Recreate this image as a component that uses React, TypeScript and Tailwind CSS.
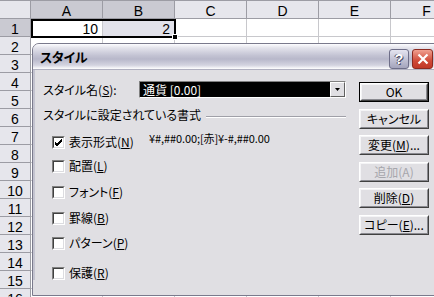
import React from "react";

const JP = "font-['Noto_Sans_CJK_JP',sans-serif] [font-feature-settings:'palt']";

function U({ c }: { c: string }) {
  return <span className="underline underline-offset-[1px]">{c}</span>;
}

function Btn({ children, def, disabled }: { children: React.ReactNode; def?: boolean; disabled?: boolean }) {
  return (
    <div className={`w-[70px] h-[20px] ${def ? "border border-black" : ""}`}>
      <div className="w-full h-full border border-t-white border-l-white border-b-[#404040] border-r-[#404040]">
        <div
          className={`w-full h-full border border-t-[#f4f4f6] border-l-[#f4f4f6] border-b-[#8a8a90] border-r-[#8a8a90] flex items-center justify-center text-[12px] leading-none ${
            disabled ? "text-[#a6a6ac]" : "text-black"
          }`}
        >
          {children}
        </div>
      </div>
    </div>
  );
}

function Check({ checked }: { checked?: boolean }) {
  return (
    <div className="w-[13px] h-[13px] border border-t-[#808080] border-l-[#808080] border-b-white border-r-white shrink-0">
      <div className="w-full h-full border border-t-[#404040] border-l-[#404040] border-b-[#dcdce0] border-r-[#dcdce0] bg-white flex items-center justify-center">
        {checked && (
          <svg width="9" height="9" viewBox="0 0 9 9">
            <path d="M1 4 L3 6 L8 1 M1 5 L3 7 L8 2 M1 6 L3 8 L8 3" stroke="black" strokeWidth="1" fill="none" />
          </svg>
        )}
      </div>
    </div>
  );
}

export default function App() {
  const cols = ["A", "B", "C", "D", "E", "F"];
  const rows = Array.from({ length: 16 }, (_, i) => i + 1);
  return (
    <div className="relative w-[434px] h-[297px] overflow-hidden bg-white font-['Liberation_Sans',sans-serif]">
      {/* sheet */}
      <div className="flex h-[19px] border-t border-[#9c9ca4] bg-[#e6e6ec]">
        <div className="w-[31px] shrink-0 border-r border-b border-[#9c9ca4]" />
        {cols.map((c, i) => (
          <div
            key={c}
            className={`w-[72px] shrink-0 border-r border-b border-[#9c9ca4] flex items-center justify-center pt-[3px] text-[14px] text-black leading-none ${
              i < 2 ? "bg-[#cacad2]" : ""
            }`}
          >
            {c}
          </div>
        ))}
      </div>
      {rows.map((r) => (
        <div key={r} className="flex h-[18px]">
          <div
            className={`w-[31px] shrink-0 border-r border-b border-[#9c9ca4] flex items-center justify-center pt-[3px] text-[14px] leading-none ${
              r === 1 ? "bg-[#cacad2]" : "bg-[#e6e6ec]"
            }`}
          >
            {r}
          </div>
          {cols.map((c, i) => (
            <div
              key={c}
              className={`w-[72px] shrink-0 border-r border-b border-[#c8c8cc] flex items-center justify-end pr-[4px] pt-[3px] text-[14px] leading-none ${
                r === 1 && i === 1 ? "bg-[#e2e2ea]" : ""
              }`}
            >
              {r === 1 && i === 0 ? "10" : r === 1 && i === 1 ? "2" : ""}
            </div>
          ))}
        </div>
      ))}
      {/* selection border */}
      <div className="absolute left-[31px] top-[19px] w-[145px] h-[19px] border-2 border-black pointer-events-none" />
      <div className="absolute left-[172px] top-[34px] w-[6px] h-[6px] bg-black border border-white" />

      {/* dialog */}
      <div className={`absolute left-[32px] top-[43px] w-[410px] h-[253px] rounded-t-[7px] border border-[#7a7a8c] bg-[#e0dfe3] overflow-hidden ${JP}`}>
        <div className="h-[26px] flex items-center pl-[7px] pr-[8px] bg-[linear-gradient(to_bottom,#fdfdff_0%,#e4e4ec_15%,#c4c4d4_45%,#b8b8ca_60%,#d4d4e0_85%,#ffffff_100%)] border-b border-[#b0b0c0]">
          <span className="text-[13px] font-bold text-black tracking-[-0.3px]">スタイル</span>
          <div className="ml-auto flex gap-[3px] mt-[5px]">
            <div className="w-[20px] h-[20px] rounded-[3px] border border-[#6e6e88] bg-[linear-gradient(to_bottom,#e4e4f0,#a4a4bc)] flex items-center justify-center text-white text-[14px] font-bold font-['Liberation_Sans',sans-serif] [text-shadow:1px_1px_0_#505068,-1px_0_0_#505068]">
              ?
            </div>
            <div className="w-[21px] h-[20px] rounded-[3px] border border-[#8c2a20] bg-[linear-gradient(to_bottom,#f0a090,#d04a38_60%,#c03828)] flex items-center justify-center">
              <svg width="12" height="12" viewBox="0 0 12 12">
                <path d="M1.5 1.5 L10.5 10.5 M10.5 1.5 L1.5 10.5" stroke="white" strokeWidth="2.2" />
              </svg>
            </div>
          </div>
        </div>
        <div className="flex pl-[8px] pt-[11px] border-l-[2px] border-l-[#c4c4d0]">
          {/* left */}
          <div className="w-[303px] shrink-0 flex flex-col">
            <div className="flex items-center h-[17px]">
              <span className="w-[96px] text-[12px] leading-none">スタイル名(<U c="S" />):</span>
              <div className="w-[207px] h-[17px] border border-t-[#808080] border-l-[#808080] border-b-white border-r-white flex bg-black">
                <div className="flex-1 text-white text-[12px] leading-none flex items-center pl-[3px]">通貨 [0.00]</div>
                <div className="w-[15px] h-full border border-t-white border-l-white border-b-[#606060] border-r-[#606060] bg-[#e0dfe3] flex items-center justify-center">
                  <svg width="5" height="3" viewBox="0 0 5 3">
                    <path d="M0 0 H5 L2.5 3 Z" fill="black" />
                  </svg>
                </div>
              </div>
            </div>
            <div className="flex items-center h-[14px] mt-[10px]">
              <span className="text-[12px] leading-none">スタイルに設定されている書式</span>
              <div className="flex-1 ml-[5px] mt-[4px] h-[2px] border-t border-[#a0a0a8] border-b border-b-white" />
            </div>
            <div className="flex items-center h-[14px] mt-[13px] pl-[9px]">
              <Check checked />
              <span className="ml-[4px] w-[80px] text-[12px] leading-none">表示形式(<U c="N" />)</span>
              <span className="mb-[8px] text-[11px] leading-none tracking-[-0.1px]">¥#,##0.00;[赤]¥-#,##0.00</span>
            </div>
            <div className="flex items-center h-[14px] mt-[10px] pl-[9px]">
              <Check />
              <span className="ml-[4px] text-[12px] leading-none">配置(<U c="L" />)</span>
            </div>
            <div className="flex items-center h-[14px] mt-[12px] pl-[9px]">
              <Check />
              <span className="ml-[4px] text-[12px] leading-none">フォント(<U c="F" />)</span>
            </div>
            <div className="flex items-center h-[14px] mt-[12px] pl-[9px]">
              <Check />
              <span className="ml-[4px] text-[12px] leading-none">罫線(<U c="B" />)</span>
            </div>
            <div className="flex items-center h-[14px] mt-[11px] pl-[9px]">
              <Check />
              <span className="ml-[4px] text-[12px] leading-none">パターン(<U c="P" />)</span>
            </div>
            <div className="flex items-center h-[14px] mt-[16px] pl-[9px]">
              <Check />
              <span className="ml-[4px] text-[12px] leading-none">保護(<U c="R" />)</span>
            </div>
          </div>
          {/* right buttons */}
          <div className="ml-[13px] flex flex-col gap-[6.6px] pt-[1px]">
            <Btn def>OK</Btn>
            <Btn>キャンセル</Btn>
            <Btn>変更(<U c="M" />)...</Btn>
            <Btn disabled>追加(A)</Btn>
            <Btn>削除(<U c="D" />)</Btn>
            <Btn>コピー(<U c="E" />)...</Btn>
          </div>
        </div>
      </div>
    </div>
  );
}
